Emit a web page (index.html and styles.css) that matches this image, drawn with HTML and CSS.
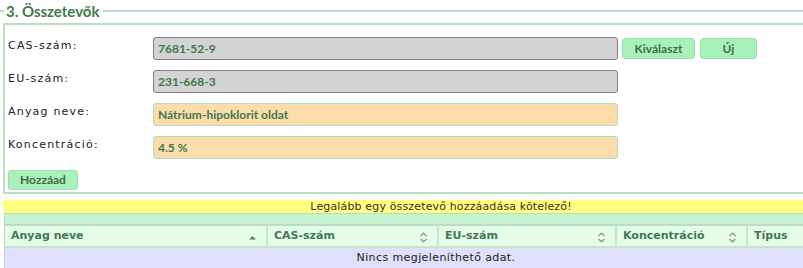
FILE: index.html
```html
<!DOCTYPE html>
<html lang="hu">
<head>
    <meta charset="UTF-8">
    <title>Összetevők</title>
    <link rel="stylesheet" href="styles.css">
</head>
<body>

<div class="section-title">
    <span class="title-line short"></span>
    <span class="title-text">3. Összetevők</span>
    <span class="title-line"></span>
</div>

<div class="section-box">
    <div class="form-row">
        <label class="form-label" for="cas">CAS-szám:</label>
        <input class="field readonly" id="cas" type="text" value="7681-52-9" readonly>
        <button class="btn" type="button">Kiválaszt</button>
        <button class="btn btn-new" type="button">Új</button>
    </div>
    <div class="form-row">
        <label class="form-label" for="eu">EU-szám:</label>
        <input class="field readonly" id="eu" type="text" value="231-668-3" readonly>
    </div>
    <div class="form-row">
        <label class="form-label" for="name">Anyag neve:</label>
        <input class="field editable" id="name" type="text" value="Nátrium-hipoklorit oldat">
    </div>
    <div class="form-row">
        <label class="form-label" for="conc">Koncentráció:</label>
        <input class="field editable" id="conc" type="text" value="4.5 %">
    </div>
    <button class="btn btn-add" type="button">Hozzáad</button>
</div>

<div class="warning">Legalább egy összetevő hozzáadása kötelező!</div>

<div class="grid">
    <div class="grid-toolbar"></div>
    <table class="grid-table">
        <colgroup>
            <col class="col-name">
            <col class="col-cas">
            <col class="col-eu">
            <col class="col-conc">
            <col class="col-type">
        </colgroup>
        <thead>
        <tr>
            <th>Anyag neve
                <svg class="sort" width="9" height="11" viewBox="0 0 9 11"><path d="M1 7.5 L4.5 4 L8 7.5 Z" fill="#5f7d66"/></svg>
            </th>
            <th>CAS-szám
                <svg class="sort" width="9" height="11" viewBox="0 0 9 11"><path d="M1.5 4 L4.5 1.2 L7.5 4 M1.5 7 L4.5 9.8 L7.5 7" fill="none" stroke="#8a9a8e" stroke-width="1.3"/></svg>
            </th>
            <th>EU-szám
                <svg class="sort" width="9" height="11" viewBox="0 0 9 11"><path d="M1.5 4 L4.5 1.2 L7.5 4 M1.5 7 L4.5 9.8 L7.5 7" fill="none" stroke="#8a9a8e" stroke-width="1.3"/></svg>
            </th>
            <th>Koncentráció
                <svg class="sort" width="9" height="11" viewBox="0 0 9 11"><path d="M1.5 4 L4.5 1.2 L7.5 4 M1.5 7 L4.5 9.8 L7.5 7" fill="none" stroke="#8a9a8e" stroke-width="1.3"/></svg>
            </th>
            <th class="last">Típus</th>
        </tr>
        </thead>
        <tbody>
        <tr>
            <td class="empty" colspan="5">Nincs megjeleníthető adat.</td>
        </tr>
        </tbody>
    </table>
</div>

</body>
</html>
```

FILE: styles.css
```css
body {
    margin: 0;
    padding: 0;
    width: 803px;
    overflow: hidden;
    background-color: #FFFFFF;
    font-family: "DejaVu Sans", Verdana, sans-serif;
    color: #222222;
}

.section-title {
    display: flex;
    align-items: center;
    height: 21px;
}

.title-line {
    flex: 1;
    height: 2px;
    background-color: #B5DFC0;
}

.title-line.short {
    flex: none;
    width: 4px;
}

.title-text {
    font-family: Lato, "Open Sans", sans-serif;
    font-weight: bold;
    font-size: 15px;
    color: #3F7A4C;
    padding: 0 4px 0 2px;
}

.section-box {
    margin: 2px 0 0 3px;
    border: 2px solid #B5DFC0;
    border-right: none;
    padding: 12px 0 2px 3px;
}

.form-row {
    display: flex;
    align-items: flex-start;
    height: 33px;
}

.form-label {
    width: 145px;
    font-size: 11px;
    letter-spacing: 1.2px;
    padding-top: 2px;
    color: #222222;
}

.field {
    width: 465px;
    height: 23px;
    box-sizing: border-box;
    border-radius: 3px;
    padding: 0 4px;
    font-family: Lato, "Open Sans", sans-serif;
    font-weight: bold;
    font-size: 12px;
    color: #3F7A4C;
    outline: none;
}

.field.readonly {
    background-color: #D3D3D3;
    border: 1px solid #808080;
}

.field.editable {
    background-color: #FCDCAA;
    border: 1px solid #A9DFBA;
}

.btn {
    height: 21px;
    box-sizing: border-box;
    margin: 1px 0 0 4px;
    padding: 0;
    width: 73px;
    background-color: #A8F2B9;
    border: 1px solid #9BE3AE;
    border-radius: 3px;
    font-family: Lato, "Open Sans", sans-serif;
    font-weight: bold;
    font-size: 12px;
    color: #3F6B48;
    cursor: pointer;
}

.btn-new {
    width: 57px;
    margin-left: 5px;
}

.btn-add {
    margin: 0;
    width: 70px;
    height: 20px;
}

.warning {
    width: 876px;
    margin: 6px 0 0 3px;
    background-color: #FFFF80;
    height: 13px;
    line-height: 13px;
    font-size: 11px;
    letter-spacing: 0.15px;
    text-align: center;
    color: #4A2A2A;
}

.grid {
    width: 862px;
    margin-left: 4px;
    border-left: 1px solid #B5DFC0;
}

.grid-toolbar {
    height: 10px;
    background-color: #C6F4D3;
    border-top: 1px solid #B5DFC0;
    border-bottom: 2px solid #B5DFC0;
}

.grid-table {
    width: 862px;
    border-collapse: collapse;
    table-layout: fixed;
}

.col-name { width: 262px; }
.col-cas { width: 171px; }
.col-eu { width: 178px; }
.col-conc { width: 131px; }
.col-type { width: 120px; }

.grid-table th {
    position: relative;
    height: 20px;
    padding: 0 6px;
    text-align: left;
    background-color: #E6FDE8;
    color: #3F7A50;
    font-size: 11px;
    font-weight: bold;
    border-right: 2px solid #C0E6CB;
    border-bottom: 2px solid #C0E6CB;
}

.grid-table th.last {
    border-right: none;
}

.grid-table th .sort {
    position: absolute;
    right: 9px;
    top: 6px;
}

.grid-table td.empty {
    height: 22px;
    vertical-align: top;
    padding: 3px 0 0 0;
    background-color: #E0E0FC;
    text-align: center;
    font-size: 11px;
    letter-spacing: 0.4px;
    color: #222222;
}
```
